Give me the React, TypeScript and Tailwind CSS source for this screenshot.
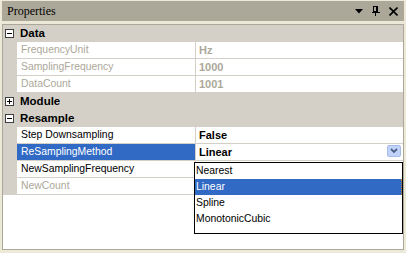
import React from "react";

function Box({ minus }: { minus: boolean }) {
  return (
    <svg width="9" height="9" viewBox="0 0 9 9" className="shrink-0">
      <rect x="0.5" y="0.5" width="8" height="8" fill="#fff" stroke="#404040" />
      <line x1="2" y1="4.5" x2="7" y2="4.5" stroke="#000" />
      {!minus && <line x1="4.5" y1="2" x2="4.5" y2="7" stroke="#000" />}
    </svg>
  );
}

function Category({ label, minus }: { label: string; minus: boolean }) {
  return (
    <div className="h-[17px] bg-[#d4d0c8] flex items-center pl-[2px]">
      <Box minus={minus} />
      <span className="ml-[6px] font-bold text-[11.5px] leading-none text-black">{label}</span>
    </div>
  );
}

function Prop({
  name,
  value,
  disabled,
  selected,
  boldValue,
}: {
  name: string;
  value?: string;
  disabled?: boolean;
  selected?: boolean;
  boldValue?: boolean;
}) {
  return (
    <div className="h-[17px] flex">
      <div className="w-[14px] bg-[#d4d0c8] shrink-0" />
      <div
        className={
          "w-[179px] shrink-0 border-r border-b border-[#d4d0c8] flex items-center pl-[4px] pt-px text-[10.4px] leading-none " +
          (selected ? "bg-[#316ac5] text-white" : disabled ? "text-[#aca899]" : "text-black")
        }
      >
        {name}
      </div>
      <div
        className={
          "flex-1 border-b border-[#d4d0c8] flex items-center pl-[3px] leading-none " +
          (boldValue ? "font-bold text-[11px] " : "text-[10.4px] ") +
          (disabled ? "text-[#aca899]" : "text-black")
        }
      >
        {value}
      </div>
    </div>
  );
}

export default function App() {
  return (
    <div className="w-[406px] h-[253px] bg-[#ece9d8] pt-px px-[2px] flex flex-col relative overflow-hidden font-['Liberation_Sans',Arial,sans-serif]">
      <div className="h-[20px] bg-[#aca899] flex items-center pl-[5px] pr-[6px] shrink-0">
        <span className="font-['Liberation_Serif','Times_New_Roman',serif] text-[12px] leading-none text-black">
          Properties
        </span>
        <div className="ml-auto flex items-center gap-[9px]">
          <svg width="8" height="5" viewBox="0 0 8 5">
            <polygon points="0,0 8,0 4,4.5" fill="#000" />
          </svg>
          <svg width="8" height="10" viewBox="0 0 8 10">
            <rect x="1.5" y="0.5" width="4" height="5" fill="none" stroke="#000" />
            <line x1="4.5" y1="0" x2="4.5" y2="6" stroke="#000" />
            <line x1="0" y1="6.5" x2="8" y2="6.5" stroke="#000" />
            <line x1="3.5" y1="7" x2="3.5" y2="10" stroke="#000" />
          </svg>
          <svg width="9" height="9" viewBox="0 0 9 9">
            <path d="M0.5 0.5 L8.5 8.5 M8.5 0.5 L0.5 8.5" stroke="#000" strokeWidth="1.6" />
          </svg>
        </div>
      </div>
      <div className="mt-[3px] mb-[3px] flex-1 border border-[#aca899] bg-white flex flex-col">
        <Category label="Data" minus />
        <Prop name="FrequencyUnit" value="Hz" disabled boldValue />
        <Prop name="SamplingFrequency" value="1000" disabled boldValue />
        <Prop name="DataCount" value="1001" disabled boldValue />
        <Category label="Module" minus={false} />
        <Category label="Resample" minus />
        <Prop name="Step Downsampling" value="False" boldValue />
        <Prop name="ReSamplingMethod" value="Linear" selected boldValue />
        <Prop name="NewSamplingFrequency" value="" />
        <Prop name="NewCount" value="" disabled />
      </div>

      <div className="absolute left-[387px] top-[145px] w-[14px] h-[12px] rounded-[2px] border border-[#a7bbe8] bg-[#c1d3fb] flex items-center justify-center">
        <svg width="8" height="6" viewBox="0 0 8 6">
          <path d="M1 1 L4 4 L7 1" fill="none" stroke="#4d6185" strokeWidth="1.8" />
        </svg>
      </div>

      <div className="absolute left-[194px] top-[162px] w-[209px] h-[72px] border border-black bg-white flex flex-col text-[10.4px] leading-none text-black">
        <div className="h-[16px] flex items-center pl-[1px] pt-px">Nearest</div>
        <div className="h-[16px] flex items-center pl-[1px] pt-px bg-[#316ac5] text-white border-r border-dotted border-[#c87f2a]">
          Linear
        </div>
        <div className="h-[16px] flex items-center pl-[1px] pt-px">Spline</div>
        <div className="h-[16px] flex items-center pl-[1px] pt-px">MonotonicCubic</div>
      </div>
    </div>
  );
}
